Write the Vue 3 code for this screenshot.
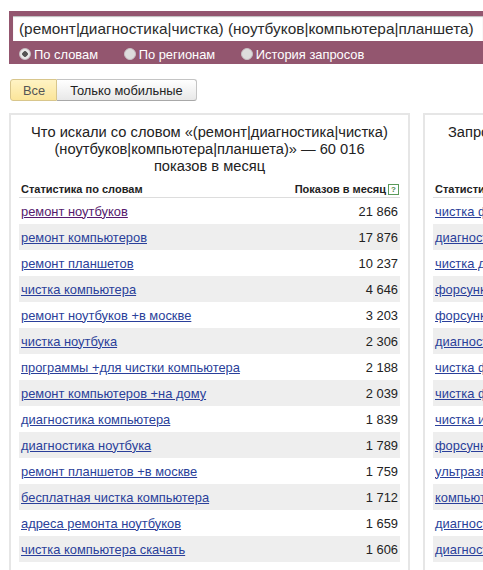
<script setup>
const rows = [
  ['ремонт ноутбуков', '21 866'], ['ремонт компьютеров', '17 876'], ['ремонт планшетов', '10 237'],
  ['чистка компьютера', '4 646'], ['ремонт ноутбуков +в москве', '3 203'], ['чистка ноутбука', '2 306'],
  ['программы +для чистки компьютера', '2 188'], ['ремонт компьютеров +на дому', '2 039'],
  ['диагностика компьютера', '1 839'], ['диагностика ноутбука', '1 789'],
  ['ремонт планшетов +в москве', '1 759'], ['бесплатная чистка компьютера', '1 712'],
  ['адреса ремонта ноутбуков', '1 659'], ['чистка компьютера скачать', '1 606'],
]
const rightRows = ['чистка форсунок', 'диагностика', 'чистка дисков', 'форсунки', 'форсунки', 'диагностика', 'чистка файлов', 'чистка форсунок', 'чистка и', 'форсунки', 'ультразвук', 'компьютер', 'диагностика', 'диагностика']
const modes = [
  { label: 'По словам', on: true }, { label: 'По регионам', on: false }, { label: 'История запросов', on: false },
]
</script>

<template>
  <div class="page">
    <header class="bar">
      <div class="query">(ремонт|диагностика|чистка) (ноутбуков|компьютера|планшета)</div>
      <div class="modes">
        <span v-for="m in modes" :key="m.label" class="mode">
          <i class="radio" :class="{ on: m.on }"></i>{{ m.label }}
        </span>
      </div>
    </header>

    <div class="tabs">
      <span class="tab active">Все</span>
      <span class="tab">Только мобильные</span>
    </div>

    <div class="panels">
      <section class="panel left">
        <h2 class="title">Что искали со словом «(ремонт|диагностика|чистка)<br>(ноутбуков|компьютера|планшета)» — 60 016<br>показов в месяц</h2>
        <div class="thead">
          <span>Статистика по словам</span>
          <span class="shows">Показов в месяц<i class="help">?</i></span>
        </div>
        <div v-for="(r, i) in rows" :key="r[0]" class="row">
          <a class="link" :class="{ visited: i === 0 }">{{ r[0] }}</a>
          <span class="num">{{ r[1] }}</span>
        </div>
      </section>
      <section class="panel right">
        <h2 class="title rtitle">Запросы, похожие на</h2>
        <div class="thead"><span>Статистика</span></div>
        <div v-for="(r, i) in rightRows" :key="i" class="row">
          <a class="link">{{ r }}</a>
        </div>
      </section>
    </div>
  </div>
</template>

<style scoped>
.page {
  width: 483px;
  height: 570px;
  overflow: hidden;
  font-family: "Liberation Sans", Arial, sans-serif;
  background: #fff;
  padding-top: 11px;
  box-sizing: border-box;
}
.bar {
  margin-left: 9px;
  height: 53px;
  background: #93566f;
  padding-top: 5px;
  box-sizing: border-box;
}
.query {
  margin-left: 4px;
  height: 25px;
  line-height: 25px;
  background: #fff;
  padding-left: 6px;
  font-size: 15.38px;
  color: #2b2b2b;
  white-space: nowrap;
  overflow: hidden;
  box-shadow: inset 0 1px 1px #bbb;
}
.modes {
  display: flex;
  height: 24px;
  padding-top: 1px;
  align-items: center;
  padding-left: 10px;
  gap: 25.6px;
  color: #fff;
  font-size: 12.9px;
}
.mode { display: flex; align-items: center; white-space: nowrap; }
.radio {
  width: 12px;
  height: 12px;
  border-radius: 50%;
  background: #ddd;
  margin-right: 3px;
  box-sizing: border-box;
  border: 1px solid #c8c0c4;
}
.radio.on { background: radial-gradient(circle, #555 0 2.5px, #e8e8e8 3px); }
.tabs {
  display: flex;
  margin: 15px 0 0 10px;
  height: 22px;
  font-size: 12.85px;
}
.tab {
  display: flex;
  align-items: center;
  padding: 0 13px 0 13px;
  border: 1px solid #c4c4c4;
  border-left: 0;
  border-radius: 0 3px 3px 0;
  color: #222;
  background: linear-gradient(#fff, #e8e8e8);
  border-bottom-color: #a8a8a8;
}
.tab.active {
  padding: 0 11px 0 12px;
  border: 1px solid #d8c68c;
  border-radius: 3px 0 0 3px;
  background: linear-gradient(#fff3c4, #fbe59a);
  color: #555;
}
.panels {
  display: flex;
  gap: 13px;
  margin: 12px 0 0 9px;
  width: 700px;
}
.panel {
  flex: none;
  border: 2px solid #e6e6e6;
  border-bottom: 0;
  box-sizing: border-box;
  height: 460px;
  padding: 0 8px;
}
.panel.left { width: 401px; }
.panel.right { width: 280px; }
.title {
  margin: 9px 0 0;
  height: 55px;
  font-weight: normal;
  font-size: 14.66px;
  line-height: 17px;
  text-align: center;
  color: #222;
  white-space: nowrap;
}
.rtitle { text-align: left; padding-left: 15px; }
.thead {
  display: flex;
  justify-content: space-between;
  align-items: center;
  height: 16px;
  padding: 2px 1px 0 2px;
  font-size: 11px;
  font-weight: bold;
  color: #222;
  border-bottom: 1px solid #ddd;
  white-space: nowrap;
}
.shows { display: flex; align-items: center; margin-left: auto; }
.help {
  width: 9px;
  height: 9px;
  margin-left: 2px;
  border: 1px solid #5a9a5a;
  font-size: 8px;
  line-height: 9px;
  text-align: center;
  font-style: normal;
  color: #4a8a4a;
}
.row {
  display: flex;
  justify-content: space-between;
  align-items: center;
  height: 26px;
  padding: 0 2px;
  font-size: 12.9px;
  white-space: nowrap;
}
.row:nth-of-type(odd) { background: #eee; }
.link { color: #2a3f9a; text-decoration: underline; }
.link.visited { color: #551a6e; }
.num { color: #222; font-size: 12.9px; }
</style>
